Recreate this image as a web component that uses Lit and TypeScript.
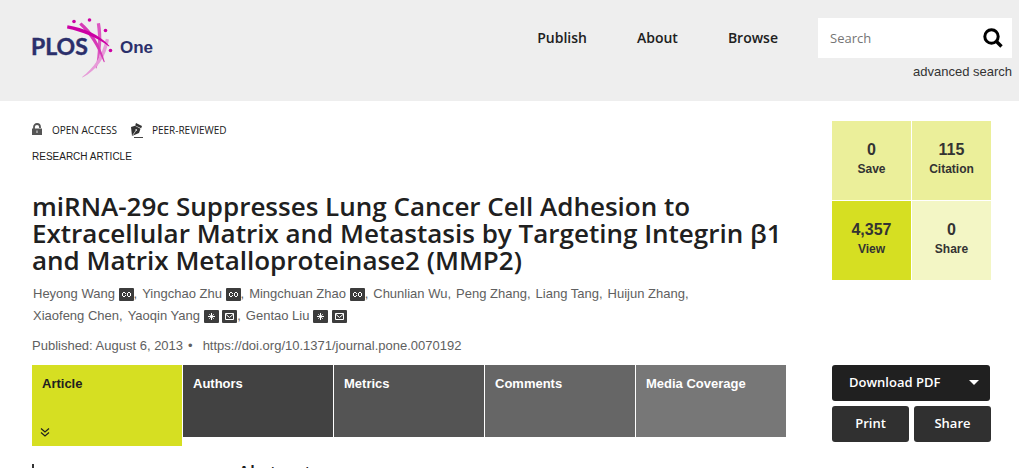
import { LitElement, html, css, svg, nothing } from "lit";
import { customElement, property } from "lit/decorators.js";

type Badge = "co" | "star" | "mail";
interface Author {
  name: string;
  badges: Badge[];
}

const AUTHORS: Author[] = [
  { name: "Heyong Wang", badges: ["co"] },
  { name: "Yingchao Zhu", badges: ["co"] },
  { name: "Mingchuan Zhao", badges: ["co"] },
  { name: "Chunlian Wu", badges: [] },
  { name: "Peng Zhang", badges: [] },
  { name: "Liang Tang", badges: [] },
  { name: "Huijun Zhang", badges: [] },
  { name: "Xiaofeng Chen", badges: [] },
  { name: "Yaoqin Yang", badges: ["star", "mail"] },
  { name: "Gentao Liu", badges: ["star", "mail"] },
];

const STATS = [
  { value: "0", label: "Save", tone: "mid" },
  { value: "115", label: "Citation", tone: "mid" },
  { value: "4,357", label: "View", tone: "strong" },
  { value: "0", label: "Share", tone: "soft" },
];

const TABS = ["Article", "Authors", "Metrics", "Comments", "Media Coverage"];

@customElement("author-badge")
export class AuthorBadge extends LitElement {
  @property() kind: Badge = "co";

  static styles = css`
    :host {
      display: inline-block;
      vertical-align: -3px;
      line-height: 0;
    }
  `;

  private glyph() {
    if (this.kind === "co")
      return svg`<path d="M4 4h2v1H4zM3 5h1v3H3zM4 8h2v1H4zM6 5h1v1H6zM6 7h1v1H6zM9 4h2v1H9zM8 5h1v3H8zM11 5h1v3h-1zM9 8h2v1H9z" fill="#fff" stroke="none" />`;
    if (this.kind === "star")
      return svg`<path d="M7.500 3v7M4 6.500h7" stroke-width="1" /><path d="M5 4l5 5M10 4L5 9" stroke-width=".7" />`;
    return svg`<path d="M3.500 3.500h8v6h-8zM3.500 4l4 3.500 4-3.500" />`;
  }

  render() {
    return html`<svg width="15" height="13" viewBox="0 0 15 13" fill="none" stroke="#fff" aria-hidden="true">
      <rect width="15" height="13" rx="1" fill="#3c3c3c" stroke="none" />
      ${this.glyph()}
    </svg>`;
  }
}

@customElement("site-header")
export class SiteHeader extends LitElement {
  static styles = css`
    :host {
      display: block;
      background: #eee;
    }
    .bar {
      display: flex;
      align-items: flex-start;
      height: 101px;
      box-sizing: border-box;
      padding: 16px 7px 0 31px;
    }
    .logo {
      display: block;
      line-height: 0;
    }
    .logo svg {
      overflow: visible;
    }
    .logo .plos {
      font: 700 23px Lato, sans-serif;
      fill: #2b2f6b;
      stroke: #2b2f6b;
      stroke-width: 0.4px;
    }
    .logo .one {
      font: 700 17px "Liberation Sans", sans-serif;
      fill: #2b2f6b;
    }
    nav {
      display: flex;
      gap: 50px;
      margin-left: auto;
      padding: 12px 40px 0 0;
    }
    nav a {
      font: 600 14px/20px "Open Sans", sans-serif;
      color: #202020;
      text-decoration: none;
    }
    .search {
      width: 194px;
      padding-top: 2px;
      text-align: right;
    }
    .field {
      display: flex;
      height: 40px;
      background: #fff;
    }
    .field input {
      flex: 1;
      min-width: 0;
      border: 0;
      padding: 0 0 0 12px;
      background: none;
      font: 13px "Open Sans", sans-serif;
      color: #333;
    }
    .field input::placeholder {
      color: #757575;
    }
    .field button {
      display: flex;
      align-items: center;
      border: 0;
      padding: 0 9px;
      background: none;
    }
    .advanced {
      display: block;
      padding-top: 5px;
      font: 13px/18px "Liberation Sans", Arial, sans-serif;
      color: #333;
      text-decoration: none;
    }
  `;

  render() {
    return html`<header class="bar">
      <a class="logo" href="#" aria-label="PLOS One">
        <svg width="125" height="64" viewBox="-1 0 125 64">
          <text class="plos" x="-1" y="39">PLOS</text>
          <text class="one" x="88" y="37">One</text>
          <path d="M68 7c2.500 14 1.500 29-3.500 45.500l-.8-.2C66.500 37 66.800 21 64.800 7.500z" fill="#dc57c1" />
          <path d="M77 23.500C74 41 65 54 50.500 61.500l-.4-.5C62 52 70 40 73.800 22.800z" fill="#e79bd8" />
          <path d="M49.500 6.500C60 15 68 28 72.800 46l-.9.3C65 30 58 19 47.200 8.500z" fill="#d63ab6" />
          <path d="M35.500 9.200C52 12 67 18 77.500 30l-.5.500C64 21 51 16 35 12.600z" fill="#cc00a4" />
          <g fill="#cc00a4">
            <circle cx="42" cy="5.500" r="1.800" />
            <circle cx="57.500" cy="4" r="1.800" />
            <circle cx="73.500" cy="14.500" r="1.800" />
            <circle cx="78.500" cy="34.500" r="1.800" />
          </g>
        </svg>
      </a>
      <nav aria-label="Main">
        <a href="#">Publish</a>
        <a href="#">About</a>
        <a href="#">Browse</a>
      </nav>
      <form class="search" @submit=${(e: Event) => e.preventDefault()}>
        <div class="field">
          <input type="search" placeholder="Search" aria-label="Search" />
          <button type="submit" aria-label="Submit search">
            <svg width="20" height="20" viewBox="0 0 20 20" fill="none" stroke="#000">
              <circle cx="8.500" cy="8.500" r="6.700" stroke-width="3" />
              <path d="M13 13l5.500 5.500" stroke-width="3.400" />
            </svg>
          </button>
        </div>
        <a class="advanced" href="#">advanced search</a>
      </form>
    </header>`;
  }
}

@customElement("article-sidebar")
export class ArticleSidebar extends LitElement {
  static styles = css`
    :host {
      display: flex;
      flex-direction: column;
      padding-top: 1px;
      font-family: "Liberation Sans", Arial, sans-serif;
      color: #333;
    }
    .stats {
      display: grid;
      grid-template-columns: 1fr 1fr;
      grid-auto-rows: 79px;
      gap: 1px;
      margin: 0 0 85px;
      padding: 0;
      list-style: none;
    }
    .stat {
      padding-top: 19px;
      box-sizing: border-box;
      text-align: center;
      font-weight: 700;
      font-size: 12px;
      line-height: 18px;
    }
    .value {
      display: block;
      font-size: 16px;
      line-height: 20px;
    }
    .mid { background: #ebef9a; }
    .strong { background: #d6df22; }
    .soft { background: #f3f6c5; }
    .actions {
      display: grid;
      grid-template-columns: 1fr 1fr;
      gap: 5px;
    }
    button {
      height: 36px;
      border: 0;
      border-radius: 3px;
      padding: 0 0 2px;
      background: #303030;
      color: #fff;
      font: 600 13px "Open Sans", sans-serif;
    }
    .download {
      grid-column: 1 / -1;
      display: flex;
      align-items: center;
      justify-content: space-between;
      padding: 0 11px 2px 17px;
      margin-right: 1px;
      background: #202020;
    }
  `;

  render() {
    return html`
      <ul class="stats">
        ${STATS.map(
          (s) => html`<li class="stat ${s.tone}"><span class="value">${s.value}</span>${s.label}</li>`
        )}
      </ul>
      <div class="actions">
        <button class="download" type="button">
          Download PDF
          <svg width="10" height="5" viewBox="0 0 10 5" aria-hidden="true"><path d="M0 0h10L5 5z" fill="#fff" /></svg>
        </button>
        <button type="button">Print</button>
        <button type="button">Share</button>
      </div>
    `;
  }
}

@customElement("app-root")
export class AppRoot extends LitElement {
  static styles = css`
    :host {
      display: block;
      background: #fff;
      color: #202020;
      font: 13px/22px "Liberation Sans", Arial, sans-serif;
    }
    a {
      color: inherit;
      text-decoration: none;
    }
    .page {
      display: grid;
      grid-template-columns: minmax(0, 1fr) 159px;
      column-gap: 46px;
      padding: 19px 28px 0 32px;
    }
    .kinds {
      display: flex;
      align-items: center;
      height: 20px;
      font: 10px/20px "Open Sans", sans-serif;
    }
    .kind {
      display: flex;
      align-items: center;
      margin-right: 14px;
    }
    .kind svg {
      margin-right: 8px;
    }
    .type {
      margin: 7px 0 0;
      font-size: 10px;
      line-height: 20px;
    }
    h1 {
      margin: 26px 0 0;
      font: 600 26px/27px "Open Sans", sans-serif;
    }
    .authors {
      display: flex;
      flex-wrap: wrap;
      column-gap: 5px;
      margin: 9px 64px 0 0;
      padding: 0 0 0 1px;
      list-style: none;
      color: #606060;
    }
    .authors li {
      white-space: nowrap;
    }
    .published {
      display: flex;
      margin: 9px 0 0;
      line-height: 20px;
      color: #606060;
    }
    .dot {
      margin: 0 10px 0 5px;
    }
    .tabs {
      display: flex;
      align-items: flex-start;
      gap: 1px;
      margin-top: 9px;
    }
    .tab {
      flex: 1;
      height: 72px;
      box-sizing: border-box;
      padding: 9px 10px;
      font-weight: 700;
      line-height: 20px;
      color: #fff;
    }
    .tab0 {
      display: flex;
      flex-direction: column;
      justify-content: space-between;
      height: 81px;
      background: #d6df22;
      color: #202020;
    }
    .tab1 { background: #424242; }
    .tab2 { background: #545454; }
    .tab3 { background: #666; }
    .tab4 { background: #777; }
    .body {
      display: grid;
      grid-template-columns: 206px 1fr;
      align-items: end;
      margin-top: 14px;
    }
    .toc {
      height: 20px;
      border-left: 2px solid #333;
    }
    h2 {
      margin: 0;
      font: 600 18px/24px "Open Sans", sans-serif;
    }
  `;

  render() {
    return html`
      <site-header></site-header>
      <div class="page">
        <main>
          <div class="kinds">
            <span class="kind">
              <svg width="12" height="14" viewBox="0 0 12 14" aria-hidden="true">
                <path d="M2 6V4a3 3 0 0 1 6 0v1" fill="none" stroke="#555" stroke-width="1.800" />
                <path d="M0 5.500h10V12H0z" fill="#555" />
                <path d="M4.300 7.500h1.400v2.500H4.300z" fill="#bbb" />
              </svg>
              OPEN ACCESS
            </span>
            <span class="kind">
              <svg width="13" height="15" viewBox="0 0 13 15" aria-hidden="true">
                <path d="M5 0l6 3-.8 2.200L4.200 2.500zM0 4l4-1.200 5.500 3L8 10l-7 3z" fill="#333" />
                <path d="M1.500 12.500l3.500-5" stroke="#ddd" stroke-width=".8" />
                <circle cx="5.200" cy="7" r=".9" fill="#ddd" />
                <path d="M3 14.500h9" stroke="#444" />
              </svg>
              PEER-REVIEWED
            </span>
          </div>
          <p class="type">RESEARCH ARTICLE</p>
          <h1>
            miRNA-29c Suppresses Lung Cancer Cell Adhesion to Extracellular Matrix and Metastasis by
            Targeting Integrin β1 and Matrix Metalloproteinase2 (MMP2)
          </h1>
          <ul class="authors">
            ${AUTHORS.map(
              (a, i) => html`<li><a href="#">${a.name}${a.badges.map(
                (b) => html` <author-badge kind=${b}></author-badge>`
              )}</a>${i < AUTHORS.length - 1 ? "," : nothing}</li>`
            )}
          </ul>
          <p class="published">
            <span>Published: August 6, 2013</span><span class="dot">•</span>
            <a href="#">https://doi.org/10.1371/journal.pone.0070192</a>
          </p>
          <nav class="tabs" aria-label="Article sections">
            ${TABS.map(
              (t, i) => html`<a class="tab tab${i}" href="#">${t}${i === 0
                ? html`<svg width="9" height="9" viewBox="1 0 9 9" overflow="visible" fill="none" stroke="#202020" stroke-width="1.200" aria-hidden="true">
                    <path d="M0 .5l4 3.500 4-3.500M0 4.500l4 3.500 4-3.500" />
                  </svg>`
                : nothing}</a>`
            )}
          </nav>
          <div class="body">
            <div class="toc"></div>
            <h2>Abstract</h2>
          </div>
        </main>
        <article-sidebar></article-sidebar>
      </div>
    `;
  }
}
